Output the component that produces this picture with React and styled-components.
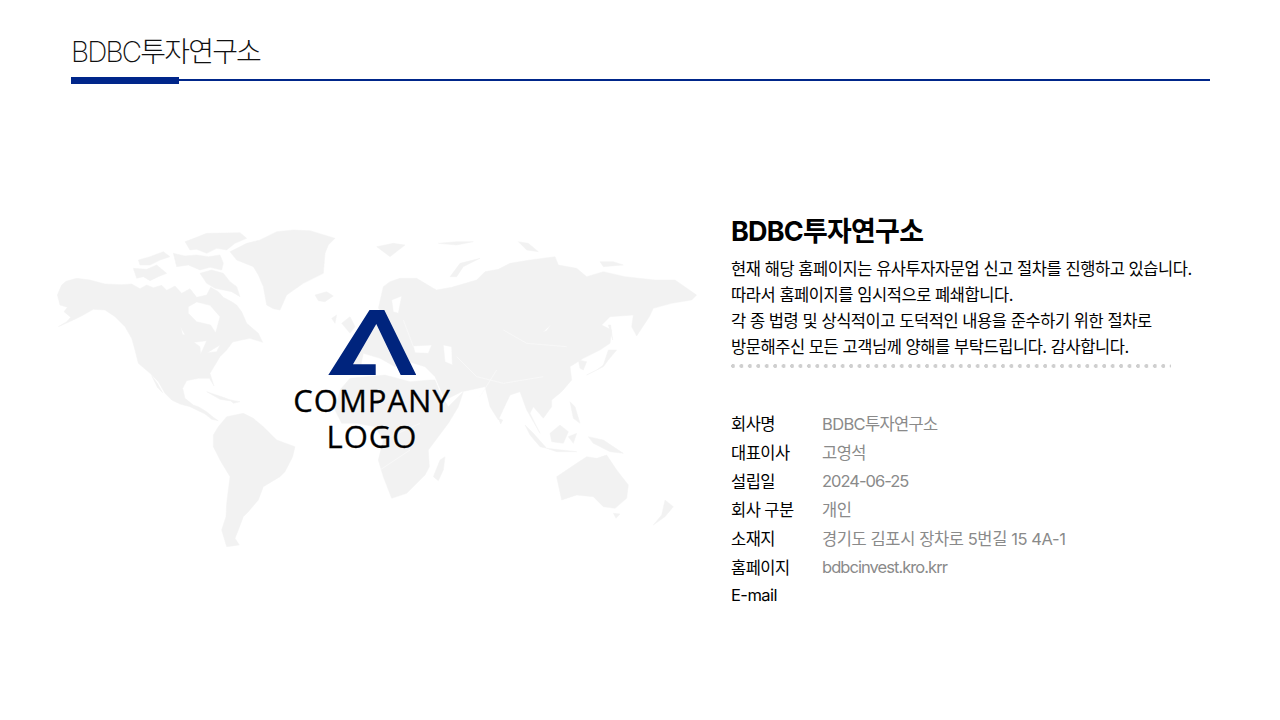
import React from "react";
import styled, { createGlobalStyle } from "styled-components";

const GlobalStyle = createGlobalStyle`
  html, body {
    margin: 0;
    padding: 0;
    background: #fff;
  }
  body {
    font-family: "Inter", "Noto Sans CJK KR", sans-serif;
  }
`;

// coordinates are 3x page px, the second group is shifted by 960
const WEST_LAND = [
  "M25 350L50 335L62 322L42 305L52 292L30 285L22 255L35 225L48 214L80 205L120 210L165 222L215 224L245 222L270 236L290 225L310 233L335 226L350 241L375 228L395 250L420 236L440 262L470 255L482 232L505 245L520 262L545 275L560 285L575 305L590 340L625 370L638 397L600 385L575 390L548 396L530 420L510 440L495 465L480 490L492 528L478 505L445 505L410 512L398 535L405 565L430 585L445 590L470 605L490 622L505 632L485 628L465 612L420 590L390 582L365 570L345 550L325 515L300 490L265 460L255 420L245 385L225 350L195 320L165 300L130 298L100 315L70 330Z M415 290L440 276L480 286L510 320L497 368L482 345L440 335L415 310Z M432 397L470 392L462 410L452 432L450 410Z M472 428L510 405L500 425Z M392 352L405 374L398 374Z",
  "M305 497L322 520L338 548L322 532Z",
  "M540 125L590 100L630 90L680 65L730 60L780 62L855 85L835 105L825 130L820 190L790 205L760 220L710 255L690 300L670 296L650 285L640 230L625 195L610 170L560 150Z",
  "M405 95L432 85L470 70L570 68L590 85L555 100L530 120L500 115L470 130L440 118L420 120Z",
  "M265 150L300 140L340 125L360 140L330 150L300 165L270 165Z",
  "M250 175L290 178L320 165L350 190L325 200L300 212L280 200L260 205Z",
  "M370 130L405 138L440 135L475 140L510 135L520 160L515 180L480 172L450 180L415 165L380 170Z",
  "M450 190L485 180L520 190L540 215L560 230L570 260L545 245L520 240L495 235L470 220Z",
  "M262 255L285 245L280 262Z",
  "M300 295L330 282L315 295Z",
  "M795 255L830 245L850 258L825 275L805 272Z",
  "M490 675L505 650L530 620L580 610L610 625L640 650L680 690L735 710L728 740L705 785L690 800L640 830L625 870L595 905L580 920L565 960L555 985L568 1005L530 1010L515 960L528 920L530 880L540 800L510 750L490 710Z",
  "M470 545L520 562L555 575L510 568Z",
  "M540 570L570 575L550 580Z",
];

const EAST_LAND = [
  "M-70 440L-30 420L-20 370L0 340L40 310L25 295L40 230L60 215L90 205L140 205L190 235L200 240L245 232L320 210L345 185L385 178L420 160L480 150L555 140L565 165L620 175L650 200L700 185L765 200L855 210L915 210L980 255L965 270L905 280L850 295L838 320L800 378L785 350L790 315L720 320L695 345L725 360L720 400L690 420L640 445L600 470L605 510L575 545L545 570L545 590L520 625L490 590L480 610L510 670L470 600L450 545L420 555L385 630L360 590L345 530L300 540L275 545L225 570L195 500L165 470L100 450L75 470L30 445L-20 430L-30 480L-70 490Z M130 408L185 405L175 430L135 428Z M220 405L245 410L247 465L225 455Z M65 270L95 258L85 310L70 305Z M520 365L542 345L530 362Z",
  "M-60 505L45 495L120 515L180 510L195 510L215 560L235 590L280 545L265 590L235 640L175 720L178 770L165 795L110 850L65 865L40 800L25 750L40 690L15 650L-40 640L-85 640L-105 600L-90 540Z",
  "M210 750L225 740L220 780L205 812L190 800Z",
  "M650 495L680 480L700 465L715 420L740 420L715 450L700 470Z",
  "M625 450L650 455L640 480L630 475Z",
  "M715 345L722 345L728 390Z",
  "M385 625L398 630L392 642Z",
  "M465 645L490 670L530 715L510 710L480 675Z",
  "M530 715L620 725L560 725Z",
  "M540 670L570 645L595 665L580 700L545 695Z",
  "M595 680L620 670L610 700Z",
  "M655 680L700 690L760 730L720 725L670 700Z",
  "M600 575L615 590L630 640L610 625Z",
  "M560 800L620 760L650 740L680 745L710 735L740 780L775 825L770 865L735 895L700 890L670 860L620 855L575 870Z",
  "M730 910L750 912L738 925Z",
  "M885 870L910 890L885 920L850 945L875 915Z",
  "M20 110L70 100L105 105L60 140Z",
  "M205 100L260 95L310 95L260 105Z",
  "M240 200L270 160L330 145L280 170L260 200Z",
  "M690 155L730 155L760 165L700 170Z",
  "M445 95L475 100L505 125L470 120Z",
  "M-85 340L-60 320L-45 350L-60 370Z",
  "M-115 325L-100 315L-105 340Z",
];

const BORDERS = [
  "M260 440L320 500L400 520L520 500",
  "M400 360L470 400L590 410",
  "M100 330L130 410",
  "M330 560L380 480",
  "M30 780L120 720",
  "M40 690L150 640",
];

const WorldMap = () => (
  <MapSvg viewBox="0 0 1980 1050">
    <g fill="#f2f2f2" fillRule="evenodd" stroke="#f2f2f2" strokeWidth="1.5" strokeLinejoin="round">
      {WEST_LAND.map((d) => (
        <path key={d} d={d} />
      ))}
      <g transform="translate(960 0)">
        {EAST_LAND.map((d) => (
          <path key={d} d={d} />
        ))}
        {BORDERS.map((d) => (
          <path key={d} d={d} fill="none" stroke="#fafafa" strokeWidth="2" />
        ))}
      </g>
    </g>
  </MapSvg>
);

const rows = [
  { label: "회사명", value: "BDBC투자연구소", spacing: -0.65 },
  { label: "대표이사", value: "고영석", spacing: -0.5 },
  { label: "설립일", value: "2024-06-25", spacing: -1 },
  { label: "회사 구분", value: "개인", spacing: -0.5 },
  { label: "소재지", value: "경기도 김포시 장차로 5번길 15 4A-1", spacing: -0.4 },
  { label: "홈페이지", value: "bdbcinvest.kro.krr", spacing: -0.95 },
  { label: "E-mail", value: "", spacing: 0 },
];

export default function App() {
  return (
    <Page>
      <GlobalStyle />
      <Header>
        <Title>BDBC투자연구소</Title>
        <Rule />
      </Header>
      <Main>
        <MapStage>
          <WorldMap />
          <Logo>
            <svg width="88" height="65" viewBox="329 310 88 65">
              <path
                d="M370.5 310H385.3L417.3 375H401.7L377.3 324L354 364.3H376.7V375H329.3Z"
                fill="#00247d"
              />
            </svg>
            <LogoText>
              COMPANY
              <br />
              LOGO
            </LogoText>
          </Logo>
        </MapStage>
        <Info>
          <CompanyName>BDBC투자연구소</CompanyName>
          <Notice>
            현재 해당 홈페이지는 유사투자자문업 신고 절차를 진행하고 있습니다.
            <br />
            따라서 홈페이지를 임시적으로 폐쇄합니다.
            <br />각 종 법령 및 상식적이고 도덕적인 내용을 준수하기 위한 절차로
            <br />
            방문해주신 모든 고객님께 양해를 부탁드립니다. 감사합니다.
          </Notice>
          <Dots />
          <Details>
            {rows.map((row) => (
              <React.Fragment key={row.label}>
                <Label>{row.label}</Label>
                <Value $spacing={row.spacing}>{row.value}</Value>
              </React.Fragment>
            ))}
          </Details>
        </Info>
      </Main>
    </Page>
  );
}

const Page = styled.div`
  width: 1280px;
  height: 720px;
  overflow: hidden;
  background: #fff;
`;

const Header = styled.header`
  padding: 32px 70px 0 71px;
`;

const Title = styled.h1`
  margin: 0;
  font-size: 28px;
  line-height: 40px;
  font-weight: 200;
  letter-spacing: -1.8px;
  color: #111;
`;

const Rule = styled.div`
  position: relative;
  height: 2px;
  margin-top: 7px;
  background: #00268a;

  &::before {
    content: "";
    position: absolute;
    left: 0;
    top: -2px;
    width: 108px;
    height: 7px;
    background: #00268a;
  }
`;

const Main = styled.main`
  display: flex;
  padding: 129px 0 0 50px;
`;

const MapStage = styled.div`
  position: relative;
  width: 660px;
  height: 350px;
  flex: none;
`;

const MapSvg = styled.svg`
  display: block;
  width: 660px;
  height: 350px;
`;

const Logo = styled.div`
  position: absolute;
  left: 243px;
  top: 100px;
  width: 158px;
  display: flex;
  flex-direction: column;
  align-items: center;
  gap: 7px;
`;

const LogoText = styled.div`
  font-family: "Open Sans", sans-serif;
  font-size: 31px;
  line-height: 36px;
  letter-spacing: 1px;
  text-align: center;
  color: #000;
  white-space: nowrap;
  -webkit-text-stroke: 0.3px #000;
`;

const Info = styled.section`
  margin-left: 21px;
  padding-top: 5px;
  width: 480px;
`;

const CompanyName = styled.h2`
  margin: 0;
  font-size: 27px;
  line-height: 34px;
  font-weight: 700;
  letter-spacing: -0.8px;
  color: #000;
`;

const Notice = styled.p`
  margin: 7px 0 0;
  font-size: 16.5px;
  line-height: 26px;
  letter-spacing: -0.45px;
  color: #000;
  white-space: nowrap;
`;

const Dots = styled.div`
  width: 440px;
  height: 4px;
  margin-top: 4px;
  background: radial-gradient(circle at 2px 2px, #cfcfcf 1.8px, transparent 2.2px) 0 0 / 8.45px 4px repeat-x;
`;

const Details = styled.dl`
  display: grid;
  grid-template-columns: 91px 1fr;
  grid-auto-rows: 28.7px;
  align-items: center;
  margin: 41px 0 0;
  font-size: 16.5px;
`;

const Label = styled.dt`
  letter-spacing: -0.55px;
  color: #000;
`;

const Value = styled.dd`
  margin: 0;
  letter-spacing: ${(p) => p.$spacing}px;
  color: #8a8a8a;
`;
